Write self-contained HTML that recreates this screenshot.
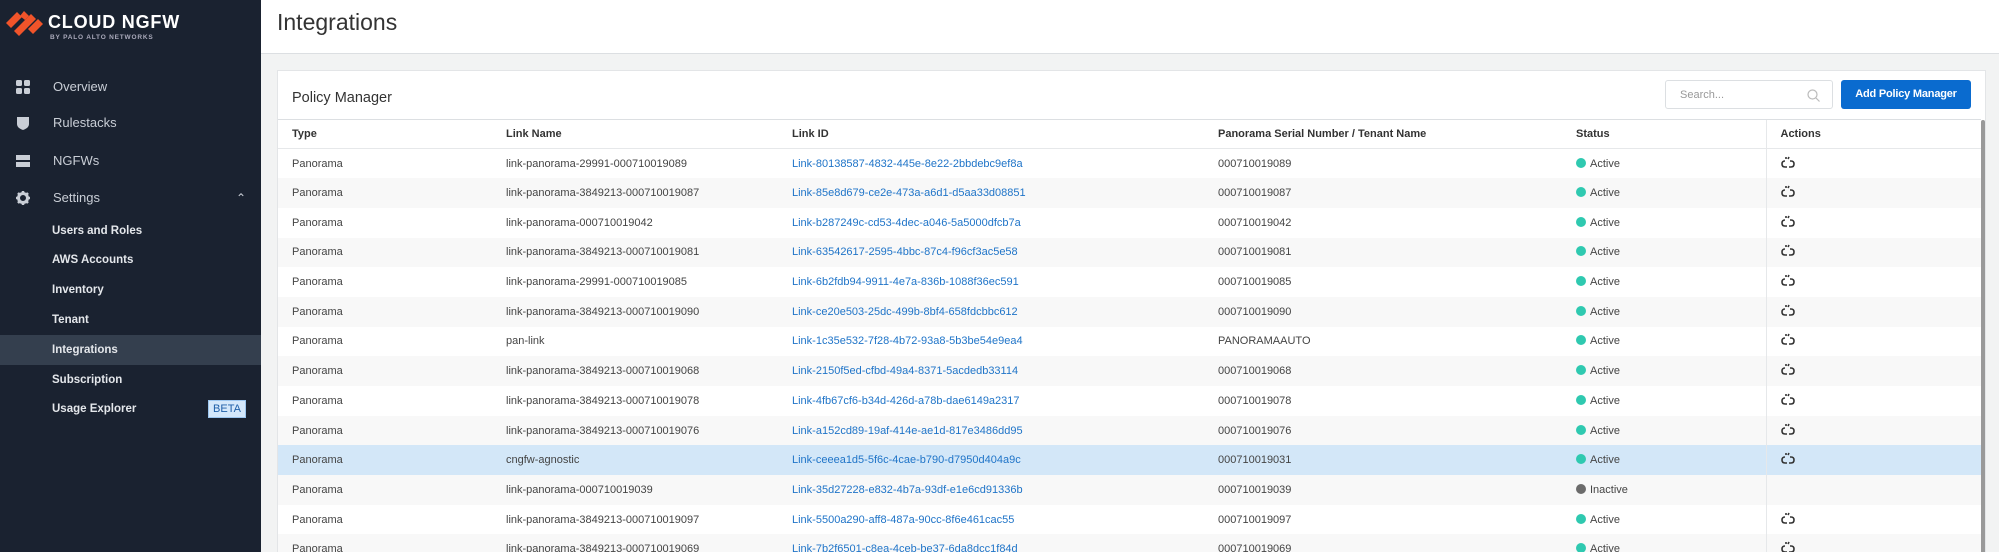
<!DOCTYPE html>
<html style="width:1999px;height:552px;overflow:hidden"><head><meta charset="utf-8"><style>
*{box-sizing:border-box;margin:0;padding:0}
body{width:1999px;height:552px;overflow:hidden;font-family:"Liberation Sans",sans-serif;background:#f2f3f3;position:relative}
.sb{position:absolute;left:0;top:0;width:261px;height:552px;background:#1a2230;color:#c9ced6}
.nav{position:absolute;left:0;width:261px;font-size:13px;line-height:20px}
.nav .ic{position:absolute;left:16px;top:3px;width:14px;height:14px}
.nav span.t{position:absolute;left:53px;top:0}
.sub{position:absolute;left:0;width:261px;height:30px;font-size:11.5px;line-height:30px;color:#e4e7eb;font-weight:bold;padding-left:52px}
.sub.on{background:#343f4e}
.hdr{position:absolute;left:261px;top:0;right:0;height:54px;background:#fff;border-bottom:1px solid #dcdfe2}
.hdr h1{position:absolute;left:16px;top:9px;font-size:23px;font-weight:normal;color:#333}
.panel{position:absolute;left:277px;top:70px;width:1709px;height:482px;background:#fff;border:1px solid #e3e5e7;border-bottom:none;overflow:hidden}
.pt{position:absolute;left:14px;top:19px;font-size:14.5px;color:#333}
.search{position:absolute;left:1387px;top:9px;width:168px;height:29px;border:1px solid #dcdfe2;border-radius:3px;font-size:11px;color:#999;padding:8px 14px}
.btn{position:absolute;left:1563px;top:9px;width:130px;height:29px;background:#0a6bcf;border-radius:3px;color:#fff;font-weight:bold;font-size:11px;text-align:center;line-height:29px;letter-spacing:-.2px}
table{position:absolute;left:0;top:48px;width:1703px;border-collapse:collapse;font-size:11px;color:#444}
th{text-align:left;font-weight:bold;height:29px;border-top:1px solid #dcdfe2;border-bottom:1px solid #e6e8ea;padding:0 0 0 14px;color:#333}
td{height:29.7px;padding:0 0 0 14px;white-space:nowrap}
tr:nth-child(even) td{background:#f8f8f8}
tr.sel td{background:#d3e7f8!important}
td.a,th.a{border-left:1px solid #e6e8ea}
.l{color:#1f74c8}
.dot{display:inline-block;width:10px;height:10px;border-radius:50%;background:#2fc9b0;vertical-align:-1px;margin-right:4px}
.dot.g{background:#6b6b6b}
.scroll{position:absolute;left:1703px;top:49px;width:4px;height:450px;background:#999;border-radius:2px}
</style></head><body>
<div class="sb">
 <svg style="position:absolute;left:6px;top:10px" width="38" height="27" viewBox="0 0 38 27"><g fill="#f0542a"><path d="M0 13 L11 2 L16 7 L5 18Z"/><path d="M8 21 L25 4 L30 9 L13 26Z"/><path d="M22 19 L32 9 L37 14 L27 24Z"/><path d="M14 6 L18 1 L23 6 L19 10Z"/></g></svg>
 <div style="position:absolute;left:48px;top:12px;font-size:18px;font-weight:bold;color:#fff;letter-spacing:.8px">CLOUD NGFW</div>
 <div style="position:absolute;left:50px;top:34px;font-size:6.5px;font-weight:bold;color:#aab;letter-spacing:.8px">BY PALO ALTO NETWORKS</div>
 <div class="nav" style="top:77px"><svg class="ic" viewBox="0 0 14 14" fill="#c9ced6"><rect x="0" y="0" width="6" height="6" rx="1.5"/><rect x="8" y="0" width="6" height="6" rx="1.5"/><rect x="0" y="8" width="6" height="6" rx="1.5"/><rect x="8" y="8" width="6" height="6" rx="1.5"/></svg><span class="t">Overview</span></div>
 <div class="nav" style="top:113px"><svg class="ic" viewBox="0 0 14 14" fill="#c9ced6"><path d="M1 1 H13 V8 Q13 12 7 14 Q1 12 1 8Z"/></svg><span class="t">Rulestacks</span></div>
 <div class="nav" style="top:151px"><svg class="ic" viewBox="0 0 14 14" fill="#c9ced6"><rect x="0" y="1" width="14" height="5"/><rect x="0" y="8" width="14" height="5"/></svg><span class="t">NGFWs</span></div>
 <div class="nav" style="top:188px"><svg class="ic" viewBox="0 0 14 14"><circle cx="7" cy="7" r="4.5" fill="none" stroke="#c9ced6" stroke-width="3"/><g stroke="#c9ced6" stroke-width="2.5"><path d="M7 0V3M7 11V14M0 7H3M11 7H14M2 2L4 4M10 10L12 12M2 12L4 10M10 4L12 2"/></g></svg><span class="t">Settings</span><span style="position:absolute;left:236px;top:0;font-size:12px">&#8963;</span></div>
 <div class="sub" style="top:216px">Users and Roles</div>
 <div class="sub" style="top:245px">AWS Accounts</div>
 <div class="sub" style="top:275px">Inventory</div>
 <div class="sub" style="top:305px">Tenant</div>
 <div class="sub on" style="top:335px">Integrations</div>
 <div class="sub" style="top:365px">Subscription</div>
 <div class="sub" style="top:394px">Usage Explorer</div>
 <div style="position:absolute;left:208px;top:400px;width:38px;height:18px;background:#d4e8fb;border:1px solid #9cc6ef;color:#1f5fa8;font-size:11px;line-height:16px;text-align:center">BETA</div>
</div>
<div class="hdr"><h1>Integrations</h1></div>
<div class="panel">
 <div class="pt">Policy Manager</div>
 <div class="search">Search...<svg style="position:absolute;right:12px;top:8px" width="13" height="13" viewBox="0 0 13 13"><circle cx="5.5" cy="5.5" r="4.5" fill="none" stroke="#bbb" stroke-width="1.2"/><path d="M9 9L12.5 12.5" stroke="#bbb" stroke-width="1.2"/></svg></div>
 <div class="btn">Add Policy Manager</div>
 <table>
 <colgroup><col style="width:214px"><col style="width:286px"><col style="width:426px"><col style="width:358px"><col style="width:204px"><col></colgroup>
 <tr><th>Type</th><th>Link Name</th><th>Link ID</th><th>Panorama Serial Number / Tenant Name</th><th>Status</th><th class="a">Actions</th></tr>
 <tbody id="b"></tbody>
 </table>
 <div class="scroll"></div>
</div>
<script>
var r=[["link-panorama-29991-000710019089","Link-80138587-4832-445e-8e22-2bbdebc9ef8a","000710019089"],
["link-panorama-3849213-000710019087","Link-85e8d679-ce2e-473a-a6d1-d5aa33d08851","000710019087"],
["link-panorama-000710019042","Link-b287249c-cd53-4dec-a046-5a5000dfcb7a","000710019042"],
["link-panorama-3849213-000710019081","Link-63542617-2595-4bbc-87c4-f96cf3ac5e58","000710019081"],
["link-panorama-29991-000710019085","Link-6b2fdb94-9911-4e7a-836b-1088f36ec591","000710019085"],
["link-panorama-3849213-000710019090","Link-ce20e503-25dc-499b-8bf4-658fdcbbc612","000710019090"],
["pan-link","Link-1c35e532-7f28-4b72-93a8-5b3be54e9ea4","PANORAMAAUTO"],
["link-panorama-3849213-000710019068","Link-2150f5ed-cfbd-49a4-8371-5acdedb33114","000710019068"],
["link-panorama-3849213-000710019078","Link-4fb67cf6-b34d-426d-a78b-dae6149a2317","000710019078"],
["link-panorama-3849213-000710019076","Link-a152cd89-19af-414e-ae1d-817e3486dd95","000710019076"],
["cngfw-agnostic","Link-ceeea1d5-5f6c-4cae-b790-d7950d404a9c","000710019031"],
["link-panorama-000710019039","Link-35d27228-e832-4b7a-93df-e1e6cd91336b","000710019039"],
["link-panorama-3849213-000710019097","Link-5500a290-aff8-487a-90cc-8f6e461cac55","000710019097"],
["link-panorama-3849213-000710019069","Link-7b2f6501-c8ea-4ceb-be37-6da8dcc1f84d","000710019069"]];
var ic='<svg width="14" height="13" viewBox="0 0 14 13" fill="none" stroke="#333" stroke-width="1.6"><path d="M4 5 Q1 5 1 8 Q1 11 4 11 H6"/><path d="M9 5 H10 Q13 5 13 8 Q13 11 10 11 H8"/><path d="M5 1V3M8 1L7 3"/></svg>';
var h='';r.forEach(function(x,i){var in_=i==11;h+='<tr'+(i==10?' class="sel"':'')+'><td>Panorama</td><td>'+x[0]+'</td><td class="l">'+x[1]+'</td><td>'+x[2]+'</td><td><span class="dot'+(in_?' g':'')+'"></span>'+(in_?'Inactive':'Active')+'</td><td class="a">'+(in_?'':ic)+'</td></tr>'});
document.getElementById('b').innerHTML=h;
</script>
</body></html>
